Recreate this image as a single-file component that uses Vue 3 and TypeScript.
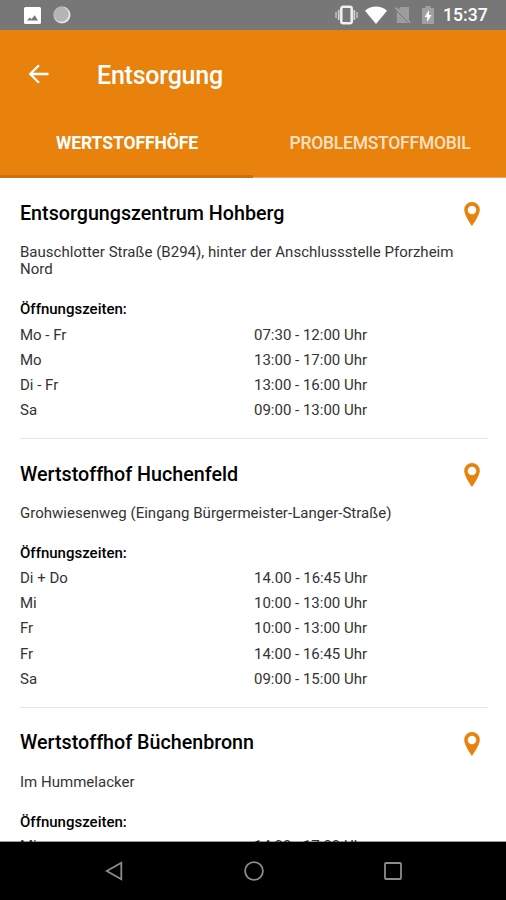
<script setup lang="ts">
interface Opening {
  days: string
  time: string
}
interface Site {
  name: string
  address: string
  hours: Opening[]
}

const sites: Site[] = [
  {
    name: 'Entsorgungszentrum Hohberg',
    address: 'Bauschlotter Straße (B294), hinter der Anschlussstelle Pforzheim Nord',
    hours: [
      { days: 'Mo - Fr', time: '07:30 - 12:00 Uhr' },
      { days: 'Mo', time: '13:00 - 17:00 Uhr' },
      { days: 'Di - Fr', time: '13:00 - 16:00 Uhr' },
      { days: 'Sa', time: '09:00 - 13:00 Uhr' },
    ],
  },
  {
    name: 'Wertstoffhof Huchenfeld',
    address: 'Grohwiesenweg (Eingang Bürgermeister-Langer-Straße)',
    hours: [
      { days: 'Di + Do', time: '14.00 - 16:45 Uhr' },
      { days: 'Mi', time: '10:00 - 13:00 Uhr' },
      { days: 'Fr', time: '10:00 - 13:00 Uhr' },
      { days: 'Fr', time: '14:00 - 16:45 Uhr' },
      { days: 'Sa', time: '09:00 - 15:00 Uhr' },
    ],
  },
  {
    name: 'Wertstoffhof Büchenbronn',
    address: 'Im Hummelacker',
    hours: [{ days: 'Mi', time: '14:00 - 17:00 Uhr' }],
  },
]
</script>

<template>
  <div class="screen">
    <div class="status">
      <svg class="status-image" width="17" height="17" viewBox="0 0 17 17">
        <rect width="17" height="17" rx="1.5" fill="#fff" />
        <path d="M3 13.500l2.800-3 1.700 1.700 3.200-4 3.300 5.300z" fill="#777" />
      </svg>
      <svg class="status-dot" width="18" height="18" viewBox="0 0 18 18">
        <circle cx="9" cy="9" r="8.5" fill="#e4e4e4" />
        <circle cx="8.200" cy="8.200" r="7.500" fill="#b5b5b5" />
      </svg>
      <span class="spacer"></span>
      <svg class="status-vibrate" width="23" height="20" viewBox="0 0 23 20">
        <path d="M1 7v6M22 7v6" stroke="#b4b4b4" stroke-width="1.800" />
        <path d="M3.700 5v10M19.300 5v10" stroke="#d0d0d0" stroke-width="1.800" />
        <rect x="6.300" y="1.800" width="10.400" height="16.400" rx="1.800" fill="#777" stroke="#f1f1f1" stroke-width="2.500" />
      </svg>
      <svg class="status-wifi" width="22" height="18" viewBox="0 0 22 18">
        <path d="M0 4.700C6.400-.9 15.600-.9 22 4.700L11 18z" fill="#fff" />
      </svg>
      <svg class="status-sim" width="16" height="18" viewBox="0 0 16 18">
        <path d="M5.500 1H14v13.200L3.400 3.200zM1.800 5.200L13.200 17H1.800z" fill="#9d9d9d" />
        <path d="M.6 1.800l14.600 15" stroke="#a9a9a9" stroke-width="1.500" />
      </svg>
      <svg class="status-battery" width="12" height="18" viewBox="0 0 12 18">
        <path d="M3.500 0h5v2H11a1 1 0 0 1 1 1v14a1 1 0 0 1-1 1H1a1 1 0 0 1-1-1V3a1 1 0 0 1 1-1h2.500z" fill="#a0a0a0" />
        <path d="M7 4L2.700 11h2.500v5L9.500 9H7z" fill="#fff" />
      </svg>
      <span class="clock">15:37</span>
    </div>

    <header class="header">
      <div class="bar">
        <svg class="back" width="22" height="20" viewBox="0 0 22 20">
          <path d="M20.500 10H2M11 1.300L2.200 10l8.800 8.700" fill="none" stroke="#fff" stroke-width="2.300" />
        </svg>
        <h1 class="title">Entsorgung</h1>
      </div>
      <nav class="tabs">
        <div class="tab active"><span class="label">WERTSTOFFHÖFE</span></div>
        <div class="tab"><span class="label">PROBLEMSTOFFMOBIL</span></div>
      </nav>
    </header>

    <main class="list">
      <section v-for="site in sites" :key="site.name" class="site">
        <div class="head">
          <h2 class="name">{{ site.name }}</h2>
          <svg class="pin" width="16" height="24" viewBox="0 0 16 24">
            <path
              fill-rule="evenodd"
              d="M8 0a7.800 7.800 0 0 0-7.800 7.800C.2 13.400 8 24 8 24s7.800-10.600 7.800-16.200A7.800 7.800 0 0 0 8 0zm0 3.700a4.300 4.300 0 1 1 0 8.600 4.300 4.300 0 0 1 0-8.600z"
              fill="#e8820c"
            />
          </svg>
        </div>
        <p class="address">{{ site.address }}</p>
        <h3 class="caption">Öffnungszeiten:</h3>
        <div v-for="(h, i) in site.hours" :key="i" class="row">
          <span>{{ h.days }}</span>
          <span>{{ h.time }}</span>
        </div>
      </section>
    </main>

    <footer class="navbar">
      <svg width="18" height="20" viewBox="0 0 18 20">
        <path d="M16.300 1.700v16.600L1.700 10z" fill="none" stroke="#8c8c8c" stroke-width="1.800" />
      </svg>
      <svg width="20" height="20" viewBox="0 0 20 20">
        <circle cx="10" cy="10" r="8.900" fill="none" stroke="#8c8c8c" stroke-width="1.800" />
      </svg>
      <svg width="18" height="18" viewBox="0 0 18 18">
        <rect x="1" y="1" width="16" height="16" rx="1" fill="none" stroke="#8c8c8c" stroke-width="1.800" />
      </svg>
    </footer>
  </div>
</template>

<style>
body {
  margin: 0;
}
</style>

<style scoped>
.screen {
  width: 506px;
  height: 900px;
  display: flex;
  flex-direction: column;
  overflow: hidden;
  background: #fff;
  color: #000;
  font-family: Roboto, 'Liberation Sans', sans-serif;
}
svg {
  display: block;
  flex: none;
}
h1,
h2,
h3,
p {
  margin: 0;
}
.status {
  flex: none;
  height: 30px;
  box-sizing: border-box;
  padding: 0 18px 0 24px;
  display: flex;
  align-items: center;
  background: #777;
}
.status-dot {
  margin-left: 12px;
}
.spacer {
  flex: 1;
}
.status-wifi {
  margin-left: 7px;
}
.status-sim {
  margin-left: 8px;
}
.status-battery {
  margin-left: 11px;
}
.clock {
  width: 45px;
  margin-left: 9px;
  color: #fff;
  font-size: 17.6px;
  font-weight: 500;
  line-height: 33px;
  white-space: nowrap;
}
.header {
  flex: none;
  height: 148px;
  background: #e8820c;
  color: #fff;
}
.bar {
  height: 88px;
  display: flex;
  align-items: center;
  padding-left: 28px;
}
.title {
  margin-left: 47px;
  padding-top: 3px;
  font-size: 25px;
  font-weight: 500;
  line-height: 30px;
  letter-spacing: -0.23px;
}
.tabs {
  height: 60px;
  display: flex;
}
.tab {
  width: 50%;
  height: 60px;
  box-sizing: border-box;
  padding: 13px 0 0 1px;
  text-align: center;
  font-size: 17.5px;
  line-height: 24px;
  font-weight: 500;
  letter-spacing: -0.24px;
  color: #fde0c6;
  border-bottom: 1px solid #efab66;
}
.tab.active {
  color: #fff;
  font-weight: 700;
  letter-spacing: -0.07px;
  border-bottom: 3px solid #ce6f0d;
}
.list {
  flex: 1;
  min-height: 0;
  overflow: hidden;
  padding: 0 18px 0 20px;
}
.site {
  padding: 23.2px 0 16px;
  border-bottom: 1px solid #e6e6e6;
}
.head {
  display: flex;
  justify-content: space-between;
  align-items: center;
  height: 24px;
  padding-right: 8px;
}
.pin {
  margin-top: 2px;
}
.name {
  padding-top: 1px;
  font-size: 19.7px;
  font-weight: 500;
  line-height: 24px;
}
.address {
  margin-top: 18.6px;
  font-size: 15px;
  line-height: 17.6px;
  letter-spacing: 0.02px;
  color: #333;
}
.caption {
  margin-top: 20.4px;
  margin-bottom: 2.4px;
  font-size: 15px;
  font-weight: 500;
  line-height: 20px;
}
.row {
  display: grid;
  grid-template-columns: 1fr 1fr;
  height: 25.1px;
  font-size: 15px;
  line-height: 26px;
  color: #333;
}
.site:last-child .row {
  line-height: 25px;
}
.navbar {
  position: relative;
  flex: none;
  height: 58px;
  box-sizing: border-box;
  padding: 0 104px 0 105px;
  display: flex;
  align-items: center;
  justify-content: space-between;
  background: #000;
  box-shadow: 0 -1px 0 rgba(0, 0, 0, 0.4);
}
</style>
